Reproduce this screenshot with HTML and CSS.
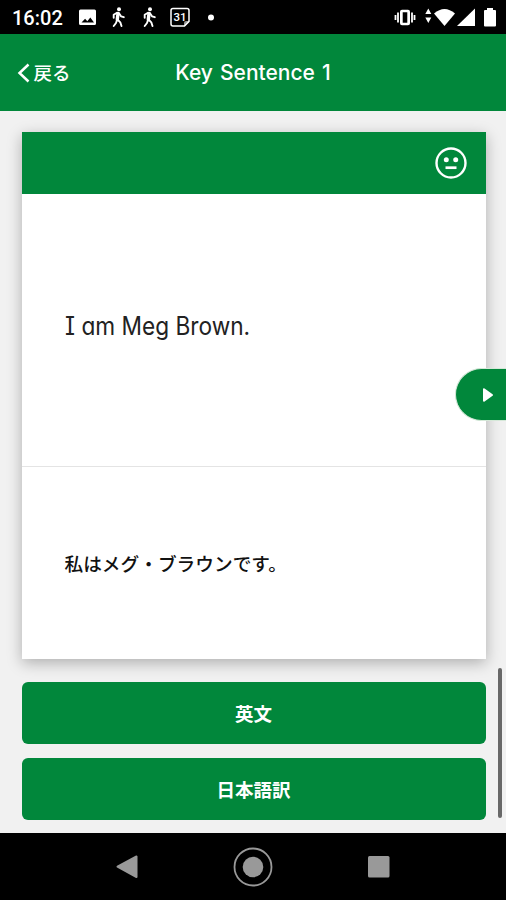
FILE: index.html
```
<!DOCTYPE html>
<html lang="ja">
<head>
<meta charset="utf-8">
<title>Key Sentence 1</title>
<link rel="stylesheet" href="styles.css">
</head>
<body>
<div class="screen">
  <div class="status">
    <span class="clock">16:02</span>
    <svg class="status-left" width="142" height="34" viewBox="78 0 142 34" fill="#fff">
      <path fill-rule="evenodd" d="M80.500 9.500h14q1.500 0 1.500 1.500v12.500q0 1.500-1.500 1.500h-14q-1.500 0-1.500-1.500V11q0-1.500 1.500-1.500zM81.500 22.500h12.500l-3.700-5-3 3.800-2.200-2.500z"/>
      <g id="walker" fill="none" stroke="#fff" stroke-linecap="round" stroke-linejoin="round">
        <circle cx="119" cy="9.300" r="2" fill="#fff" stroke="none"/>
        <path d="M118 13.500l-.7 6" stroke-width="3.400"/>
        <path d="M117 12.700l-3.300 2.100v2.900M119 13.200l2 3.100 2.800.9M117 20l-1 3-2.300 3M117.500 19.500l2.800 2.800 1.200 3.700" stroke-width="1.900"/>
      </g>
      <use href="#walker" x="31"/>
      <path d="M173 8.500h14q2 0 2 2v11l-4.500 4.500H173q-2 0-2-2V10.500q0-2 2-2z" fill="none" stroke="#fff" stroke-width="1.500"/>
      <path d="M189 21v1l-4 4h-1v-3q0-2 2-2z" opacity=".6"/>
      <text class="date" x="180" y="20.900" text-anchor="middle">31</text>
      <circle cx="211" cy="17.500" r="3"/>
    </svg>
    <svg class="status-right" width="112" height="34" viewBox="394 0 112 34" fill="#fff">
      <path fill-rule="evenodd" d="M402 9.800h6q2 0 2 2v11.400q0 2-2 2h-6q-2 0-2-2V11.800q0-2 2-2zM402.700 12.300v10.400h4.600V12.300z"/>
      <path d="M398 12.500v10M395.500 15v5M412 12.500v10M414.500 15v5" stroke="#fff" stroke-width="1.800"/>
      <path d="M425.300 14l3-5.500 3 5.500zM425.300 17.500h6l-3 5.500z"/>
      <path d="M434 13.500q10.500-9 21 0L444.500 26z"/>
      <path d="M475 8.500V26H457z"/>
      <path d="M487 8h6v2h2q1 0 1 1v14.500q0 1-1 1h-10q-1 0-1-1V11q0-1 1-1h2z"/>
    </svg>
  </div>

  <header class="header">
    <a class="back">
      <svg width="14" height="20" viewBox="0 0 14 20"><path d="M11.500 1.500L2.500 10l9 8.500" fill="none" stroke="#fff" stroke-width="2.500"/></svg>
      <span class="back-label">戻る</span>
    </a>
    <h1 class="title">Key Sentence 1</h1>
  </header>

  <main class="main">
    <section class="card">
      <div class="card-head">
        <svg width="32" height="32" viewBox="0 0 32 32"><circle cx="16" cy="16" r="14.500" fill="none" stroke="#fff" stroke-width="2.400"/><circle cx="11.300" cy="12.800" r="2.500" fill="#fff"/><circle cx="20.700" cy="12.800" r="2.500" fill="#fff"/><path d="M10.500 20.700h11" stroke="#fff" stroke-width="2.700"/></svg>
      </div>
      <div class="english"><p>I am Meg Brown.</p></div>
      <div class="japanese"><p>私はメグ・ブラウンです。</p></div>
    </section>
    <div class="actions">
      <button class="action">英文</button>
      <button class="action">日本語訳</button>
    </div>
    <div class="next">
      <svg width="12" height="16" viewBox="0 0 12 16"><path d="M2 2.200v11.600L10 8z" fill="#fff" stroke="#fff" stroke-width="2" stroke-linejoin="round"/></svg>
    </div>
    <div class="scrollbar"></div>
  </main>

  <nav class="nav">
    <svg width="24" height="26" viewBox="0 0 24 26"><path d="M21.500 2.500v20.500L2.500 12.700z" fill="#999" stroke="#999" stroke-width="2" stroke-linejoin="round"/></svg>
    <svg width="40" height="40" viewBox="0 0 40 40"><circle cx="20" cy="20" r="18.500" fill="none" stroke="#999" stroke-width="1.800"/><circle cx="20" cy="20" r="10.300" fill="#999"/></svg>
    <svg width="22" height="22" viewBox="0 0 22 22"><rect width="21.500" height="21.500" rx="1.500" fill="#999"/></svg>
  </nav>
</div>
</body>
</html>
```
FILE: styles.css
```
* { box-sizing: border-box; }
body {
  margin: 0;
  background: #000;
  font-family: "Inter", "Noto Sans CJK JP", sans-serif;
}
h1, p { margin: 0; }
.screen {
  width: 506px;
  height: 900px;
  display: flex;
  flex-direction: column;
  overflow: hidden;
}
.status {
  height: 34px;
  flex: none;
  display: flex;
  align-items: center;
  padding-left: 12px;
  background: #000;
  color: #fff;
}
.clock {
  width: 66px;
  padding-top: 1px;
  font: 500 20px/34px Roboto, sans-serif;
}
.date { font: 500 11.500px Roboto, sans-serif; }
.status-right { margin-left: auto; }
.header {
  height: 77px;
  flex: none;
  display: grid;
  grid-template-columns: 80px 1fr 80px;
  align-items: center;
  background: #01873b;
  color: #fff;
}
.back {
  display: flex;
  align-items: center;
  gap: 3px;
  padding-left: 16.500px;
  font: 500 18.500px/28px "Noto Sans CJK JP", sans-serif;
  white-space: nowrap;
}
.back-label { padding-bottom: 2px; }
.title {
  text-align: center;
  font-size: 21px;
  line-height: 28px;
  font-weight: 500;
  word-spacing: 1.500px;
}
.main {
  position: relative;
  height: 722px;
  flex: none;
  padding: 21px 20.500px 0 21.500px;
  background: #f1f1f1;
}
.card {
  height: 527px;
  display: flex;
  flex-direction: column;
  background: #fff;
  box-shadow: 0 4px 14px rgba(0, 0, 0, .28);
}
.card-head {
  height: 62px;
  display: flex;
  align-items: center;
  justify-content: flex-end;
  padding-right: 19px;
  background: #01873b;
}
.english, .japanese {
  display: flex;
  align-items: center;
  padding-left: 43px;
}
.english {
  height: 273px;
  padding-bottom: 8px;
  border-bottom: 1px solid #e4e4e4;
  color: #222;
  font-size: 25px;
  font-feature-settings: "cv11", "cv08";
}
.english p {
  transform: scaleX(.907);
  transform-origin: left center;
}
.japanese {
  flex: 1;
  padding-bottom: 1px;
  color: #111;
  font: 500 18.700px/28px "Noto Sans CJK JP", sans-serif;
}
.actions {
  display: flex;
  flex-direction: column;
  gap: 14px;
  margin-top: 23px;
}
.action {
  height: 62px;
  padding: 0 0 1px;
  border: 0;
  border-radius: 6px;
  background: #01873b;
  color: #fff;
  font: 700 18.500px/28px "Noto Sans CJK JP", sans-serif;
}
.next {
  position: absolute;
  right: 0;
  top: 257px;
  width: 51px;
  height: 53px;
  display: flex;
  align-items: center;
  justify-content: flex-end;
  padding-right: 12px;
  border: 1px solid #d5e8d8;
  border-right: 0;
  border-radius: 27px 0 0 27px;
  background: #01873b;
}
.scrollbar {
  position: absolute;
  right: 4px;
  top: 557px;
  width: 4px;
  height: 150px;
  border-radius: 2px;
  background: #686868;
}
.nav {
  flex: 1;
  display: grid;
  grid-template-columns: 126px 126px 126px;
  justify-content: center;
  justify-items: center;
  align-items: center;
  background: #000;
}
```
